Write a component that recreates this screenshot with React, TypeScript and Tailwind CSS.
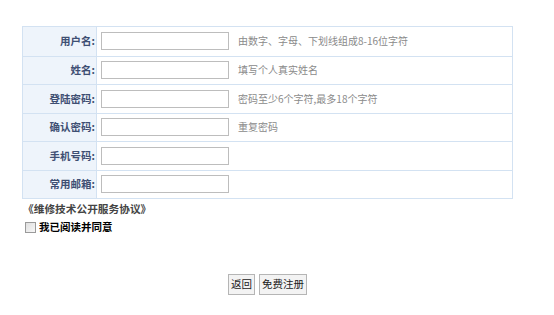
import React from "react";

const rows = [
  { label: "用户名:", hint: "由数字、字母、下划线组成8-16位字符" },
  { label: "姓名:", hint: "填写个人真实姓名" },
  { label: "登陆密码:", hint: "密码至少6个字符,最多18个字符" },
  { label: "确认密码:", hint: "重复密码" },
  { label: "手机号码:", hint: "" },
  { label: "常用邮箱:", hint: "" },
];

export default function App() {
  return (
    <div
      className="w-[554px] h-[315px] bg-white text-[10.5px] leading-none"
      style={{ fontFamily: '"Noto Sans CJK SC", "Liberation Sans", sans-serif' }}
    >
      <div className="pt-[26px] pl-[22px] w-[513px]">
        <div className="border border-[#d3e2f2]">
          {rows.map((r, i) => (
            <div
              key={i}
              className={`flex h-[28.5px] ${i > 0 ? "border-t border-[#d3e2f2]" : ""}`}
            >
              <div className="w-[74px] shrink-0 bg-[#eef4fb] border-r border-[#d3e2f2] flex items-center justify-end pr-[1px] font-bold text-[#3e4f73]">
                {r.label}
              </div>
              <div className="flex items-center pl-[4px]">
                <div className="w-[128px] h-[18px] border border-[#bdbdbd] bg-white" />
                {r.hint && (
                  <span className="ml-[9px] text-[#8a8a8a] text-[10px]">{r.hint}</span>
                )}
              </div>
            </div>
          ))}
        </div>
      </div>
      <div className="pl-[23px] pt-[5px] text-[#444] font-bold text-[10.7px]">《维修技术公开服务协议》</div>
      <div className="pl-[25px] pt-[7px] flex items-center">
        <div className="w-[11px] h-[11px] border border-[#9a9a9a] bg-gradient-to-br from-[#e0e0e0] to-[#f7f7f7]" />
        <span className="ml-[3px] font-bold text-black">我已阅读并同意</span>
      </div>
      <div className="flex justify-start pl-[228px] pt-[41px] gap-[4px]">
        <button className="h-[21px] w-[27px] border border-[#b5b5b5] bg-[#f3f3f3] text-[#222] text-[10.5px]">
          返回
        </button>
        <button className="h-[21px] w-[48px] border border-[#b5b5b5] bg-[#f3f3f3] text-[#222] text-[10.5px]">
          免费注册
        </button>
      </div>
    </div>
  );
}
